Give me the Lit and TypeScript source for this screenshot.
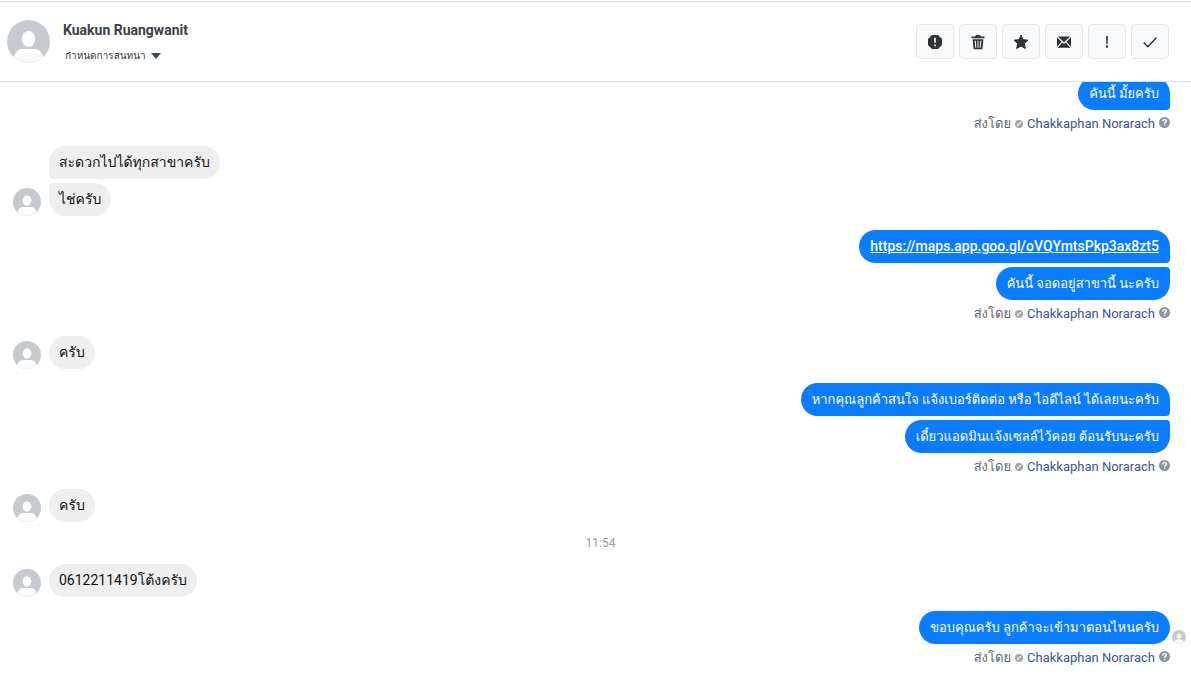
import { LitElement, html, css, svg, nothing } from "lit";
import { customElement, property } from "lit/decorators.js";
import { classMap } from "lit/directives/class-map.js";

type Message = { text: string; link?: boolean };
type Entry =
  | { kind: "in"; messages: Message[] }
  | { kind: "out"; messages: Message[]; seen?: boolean; continued?: boolean }
  | { kind: "time"; label: string };

const thread: Entry[] = [
  { kind: "out", messages: [{ text: "คันนี้ มั้ยครับ" }], continued: true },
  { kind: "in", messages: [{ text: "สะดวกไปได้ทุกสาขาครับ" }, { text: "ไช่ครับ" }] },
  {
    kind: "out",
    messages: [
      { text: "https://maps.app.goo.gl/oVQYmtsPkp3ax8zt5", link: true },
      { text: "คันนี้ จอดอยู่สาขานี้ นะครับ" },
    ],
  },
  { kind: "in", messages: [{ text: "ครับ" }] },
  {
    kind: "out",
    messages: [
      { text: "หากคุณลูกค้าสนใจ แจ้งเบอร์ติดต่อ หรือ ไอดีไลน์ ได้เลยนะครับ" },
      { text: "เดี๋ยวแอดมินเเจ้งเซลล์ไว้คอย ต้อนรับนะครับ" },
    ],
  },
  { kind: "in", messages: [{ text: "ครับ" }] },
  { kind: "time", label: "11:54" },
  { kind: "in", messages: [{ text: "0612211419โต้งครับ" }] },
  { kind: "out", messages: [{ text: "ขอบคุณครับ ลูกค้าจะเข้ามาตอนไหนครับ" }], seen: true },
];

const actions = [
  {
    label: "Report",
    icon: svg`<path fill-rule="evenodd" d="M5 1h6l4 4v6l-4 4H5l-4-4V5zM7.200 3.800v5h1.600v-5zM7.200 10.400v1.800h1.600v-1.800z"/>`,
  },
  {
    label: "Delete",
    icon: svg`<path fill-rule="evenodd" d="M5 2.500Q5.500.8 8 .8t3 1.700h3.500V4.300h-13V2.500zM2.600 5.300h10.800L12.400 15.200H3.600zM4.700 6.800l.6 7h1l-.5-7zM7.500 6.800v7h1v-7zM10.200 6.800l-.5 7h1l.6-7z"/>`,
  },
  {
    label: "Star",
    icon: svg`<path stroke="currentColor" stroke-linejoin="round" d="M8 1.200l2 4.500 5 .5-3.700 3.300 1.100 5L8 12l-4.400 2.500 1.100-5L1 6.200l5-.5z"/>`,
  },
  {
    label: "Mark as unread",
    icon: svg`<path d="M1.800 2.500h12.400L8 8.200zM1 3.300l4.600 4.500L1 12.800zM15 3.300v9.500l-4.600-5zM6.300 8.500L8 10l1.700-1.500 4.500 5.200H1.800z"/>`,
  },
  {
    label: "Mark as follow up",
    icon: svg`<path d="M7 2.300h2l-.4 8H7.400zM7 11.500h2v2.200H7z"/>`,
  },
  {
    label: "Mark as done",
    icon: svg`<path fill="none" stroke="currentColor" stroke-width="1.500" d="M1.800 8.800l4 4L14.400 3.800"/>`,
  },
];

@customElement("user-avatar")
export class UserAvatar extends LitElement {
  static styles = css`
    :host {
      display: block;
    }
    .face {
      display: block;
      width: 100%;
      height: 100%;
    }
  `;
  render() {
    return html`<svg class="face" viewBox="0 0 43 43" aria-hidden="true">
      <defs>
        <clipPath id="disc"><circle cx="21.500" cy="21.500" r="21.500" /></clipPath>
        <linearGradient id="torso" x1="0" y1="0" x2="0" y2="1">
          <stop offset="0" stop-color="#ffffff" />
          <stop offset="1" stop-color="#f6f7f8" />
        </linearGradient>
      </defs>
      <g clip-path="url(#disc)">
        <rect width="43" height="43" fill="#c6cacf" />
        <ellipse cx="21.500" cy="19" rx="6.700" ry="8" fill="#fff" />
        <path d="M6 43c0-9 4-14 9.500-14h12c5.500 0 9.500 5 9.500 14z" fill="url(#torso)" />
      </g>
    </svg>`;
  }
}

@customElement("chat-entry")
export class ChatEntry extends LitElement {
  @property({ attribute: false }) entry!: Entry;

  static styles = css`
    :host {
      display: block;
      flex: none;
    }
    .time {
      padding-left: 10px;
      line-height: 14px;
      text-align: center;
      font-size: 12px;
      color: #999;
    }
    .incoming {
      display: flex;
      align-items: flex-end;
      gap: 8px;
      padding-left: 13px;
    }
    .avatar {
      width: 28px;
      height: 28px;
    }
    .stack {
      display: flex;
      flex-direction: column;
      align-items: flex-start;
      gap: 4px;
    }
    .outgoing {
      display: grid;
      grid-template-columns: 1fr 21px;
    }
    .outgoing .stack {
      align-items: flex-end;
    }
    .bubble {
      box-sizing: border-box;
      padding: 6px 10px;
      border-radius: 17px;
      background: #eeeeee;
      color: #111;
      font-size: 14px;
      line-height: 21px;
    }
    .incoming .bubble:first-child:not(:last-child) {
      border-bottom-left-radius: 4px;
    }
    .incoming .bubble:last-child:not(:first-child) {
      border-top-left-radius: 4px;
    }
    .outgoing .bubble {
      padding: 6px 11px;
      background: #0a7cff;
      color: #fff;
      font-size: 13px;
    }
    .outgoing .bubble:first-child:not(:last-child) {
      border-bottom-right-radius: 4px;
    }
    .outgoing .bubble:last-child:not(:first-child) {
      border-top-right-radius: 4px;
    }
    .outgoing.continued .bubble {
      border-bottom-right-radius: 4px;
    }
    .bubble a {
      color: inherit;
      font-size: 14px;
      font-weight: 500;
    }
    .seen {
      align-self: end;
      justify-self: start;
      width: 14px;
      height: 14px;
      margin-left: 2px;
    }
    .meta {
      grid-column: 1;
      display: flex;
      justify-content: flex-end;
      align-items: center;
      gap: 4px;
      height: 22px;
      padding-top: 6px;
      box-sizing: border-box;
      font-size: 13px;
      line-height: 16px;
      color: #606770;
    }
    .sender {
      color: #385898;
      text-decoration: none;
    }
    .mark {
      width: 8px;
      height: 8px;
    }
    .help {
      width: 11px;
      height: 11px;
      padding-bottom: 4px;
    }
  `;

  private bubbles(messages: Message[]) {
    return html`<div class="stack">
      ${messages.map(
        (m) => html`<div class="bubble">${m.link ? html`<a href=${m.text}>${m.text}</a>` : m.text}</div>`,
      )}
    </div>`;
  }

  render() {
    const e = this.entry;
    if (e.kind === "time") return html`<div class="time">${e.label}</div>`;
    if (e.kind === "in") {
      return html`<div class="incoming">
        <user-avatar class="avatar"></user-avatar>
        ${this.bubbles(e.messages)}
      </div>`;
    }
    return html`<div class=${classMap({ outgoing: true, continued: !!e.continued })}>
      ${this.bubbles(e.messages)}
      ${e.seen ? html`<user-avatar class="seen"></user-avatar>` : nothing}
      <div class="meta">
        <span>ส่งโดย</span>
        <svg class="mark" viewBox="0 0 8 8" aria-hidden="true">
          <circle cx="4" cy="4" r="4" fill="#a2a5aa" />
          <path d="M2.200 5.800L5.800 2.200" stroke="#fff" stroke-width="1.200" />
        </svg>
        <a class="sender" href="#">Chakkaphan Norarach</a>
        <svg class="help" viewBox="0 0 11 11" aria-hidden="true">
          <circle cx="5.500" cy="5.500" r="5.500" fill="#8d949e" />
          <path d="M3.800 4.400c0-2.400 3.500-2.200 3.500-.2 0 1.200-1.700 1.200-1.700 2.500M5.600 7.500v1.300" fill="none" stroke="#fff" stroke-width="1.300" />
        </svg>
      </div>
    </div>`;
  }
}

@customElement("app-root")
export class AppRoot extends LitElement {
  static styles = css`
    :host {
      display: flex;
      flex-direction: column;
      height: 100vh;
      overflow: hidden;
      background: #fff;
      font-family: Roboto, Loma, Waree, "Noto Sans Thai Looped", "Noto Looped Thai", Tahoma, "Noto Sans", sans-serif;
    }
    .header {
      flex: none;
      display: flex;
      align-items: flex-start;
      box-sizing: border-box;
      height: 81px;
      margin-top: 1px;
      padding: 18px 22px 0 7px;
      border-top: 1px solid #dadde1;
      border-bottom: 1px solid #dadde1;
    }
    .portrait {
      width: 43px;
      height: 43px;
    }
    .who {
      flex: 1;
      padding-left: 13px;
    }
    .name {
      margin: 0;
      font-size: 14px;
      line-height: 20px;
      font-weight: 700;
      color: #3c4046;
    }
    .assign {
      display: flex;
      align-items: center;
      gap: 5px;
      margin-top: 12px;
      padding: 0 2px;
      border: 0;
      background: none;
      font: inherit;
      font-size: 10px;
      line-height: 8px;
      color: #303338;
    }
    .assign-label {
      height: 8px;
      overflow: hidden;
    }
    .caret {
      width: 10px;
      height: 6px;
    }
    .actions {
      display: flex;
      gap: 5px;
      padding-top: 4px;
    }
    .action {
      display: grid;
      place-items: center;
      width: 38px;
      height: 35px;
      padding: 0;
      border: 1px solid #e4e6ea;
      border-radius: 4px;
      background: #f8f9fb;
      color: #303338;
    }
    .icon {
      width: 16px;
      height: 16px;
      fill: currentColor;
    }
    .thread {
      flex: 1;
      min-height: 0;
      display: flex;
      flex-direction: column;
      justify-content: flex-end;
      gap: 14px;
      padding-bottom: 27px;
      overflow: hidden;
    }
  `;

  render() {
    return html`
      <header class="header">
        <user-avatar class="portrait"></user-avatar>
        <div class="who">
          <h1 class="name">Kuakun Ruangwanit</h1>
          <button class="assign" type="button">
            <span class="assign-label">กำหนดการสนทนา</span>
            <svg class="caret" viewBox="0 0 10 6" aria-hidden="true"><path d="M0 0h10L5 6z" fill="#444950" /></svg>
          </button>
        </div>
        <div class="actions">
          ${actions.map(
            (a) => html`<button class="action" type="button" aria-label=${a.label}>
              <svg class="icon" viewBox="0 0 16 16" aria-hidden="true">${a.icon}</svg>
            </button>`,
          )}
        </div>
      </header>
      <main class="thread">${thread.map((e) => html`<chat-entry .entry=${e}></chat-entry>`)}</main>
    `;
  }
}
